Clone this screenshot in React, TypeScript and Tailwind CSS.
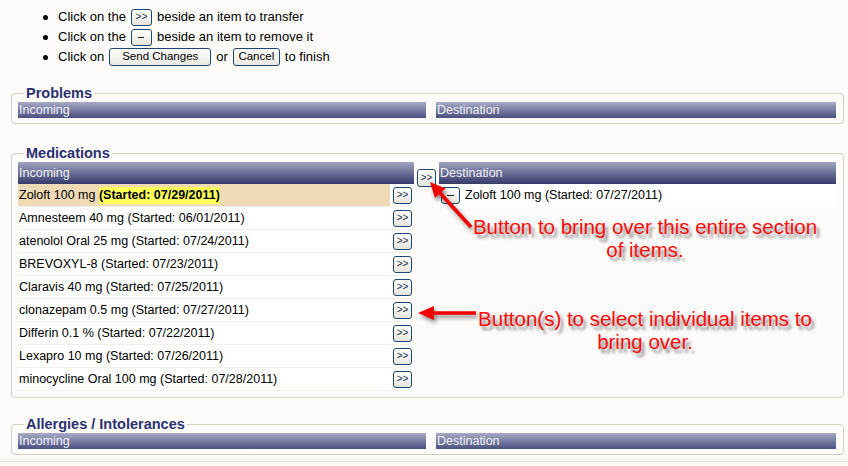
import React from 'react';

const meds = [
  { name: 'Zoloft 100 mg', started: '07/29/2011', hot: true },
  { name: 'Amnesteem 40 mg', started: '06/01/2011' },
  { name: 'atenolol Oral 25 mg', started: '07/24/2011' },
  { name: 'BREVOXYL-8', started: '07/23/2011' },
  { name: 'Claravis 40 mg', started: '07/25/2011' },
  { name: 'clonazepam 0.5 mg', started: '07/27/2011' },
  { name: 'Differin 0.1 %', started: '07/22/2011' },
  { name: 'Lexapro 10 mg', started: '07/26/2011' },
  { name: 'minocycline Oral 100 mg', started: '07/28/2011' },
];

function SmallButton({ label, className = '' }: { label: string; className?: string }) {
  return <span className={`inline-flex items-center justify-center w-[19px] h-[17px] border border-[#1e4672] rounded-[3px] bg-gradient-to-b from-white to-[#e6e5dc] text-[10px] leading-none text-[#1a2a4a] ${className}`}>
      {label}
    </span>;
}

function Minus() {
  return <span className="inline-flex items-center justify-center w-[19px] h-[17px] border border-[#1e4672] rounded-[3px] bg-gradient-to-b from-white to-[#e6e5dc]">
      <span className="block w-[7px] h-px bg-[#222]" />
    </span>;
}

function Header({ label, tall = false }: { label: string; tall?: boolean }) {
  return <div className={tall ? 'h-[22px] flex items-center pl-px text-[12.5px] text-[#f2f3fa] bg-gradient-to-b from-[#a2a5c1] to-[#363b6a]' : 'h-[16px] flex items-center pl-px text-[12.5px] text-[#f2f3fa] bg-gradient-to-b from-[#a9abc5] to-[#4b5080]'}>
      {label}
    </div>;
}

function Section({ title, className = '', children }: { title: string; className?: string; children: React.ReactNode }) {
  return <fieldset className={`ml-[11px] mr-[4px] border border-[#d2d0c0] rounded-[4px] pl-[6px] pr-[7px] ${className}`}>
      <legend className="ml-[6px] px-[2px] text-[14.5px] leading-[16px] font-bold text-[#2c3170]">
        {title}
      </legend>
      {children}
    </fieldset>;
}

function EmptySection({ title, className }: { title: string; className: string }) {
  return <Section title={title} className={className}>
      <div className="grid grid-cols-[408px_1fr] gap-[10px] pt-px">
        <Header label="Incoming" />
        <Header label="Destination" />
      </div>
    </Section>;
}

export default function App() {
  return <div className="relative w-[848px] h-[466px] overflow-hidden bg-[#fcfbf9] font-['Liberation_Sans',Arial,sans-serif] text-black">
      <ul className="pt-[7px] pl-[43px] text-[13px]">
        <li className="flex items-center h-[20px]">
          <span className="w-[5px] h-[5px] rounded-full bg-black mr-[10px]" />
          Click on the
          <SmallButton label=">>" className="mx-[5px] w-[21px] h-[17px]" />
          beside an item to transfer
        </li>
        <li className="flex items-center h-[20px]">
          <span className="w-[5px] h-[5px] rounded-full bg-black mr-[10px]" />
          Click on the
          <span className="mx-[5px] inline-flex items-center justify-center w-[21px] h-[17px] border border-[#1e4672] rounded-[3px] bg-gradient-to-b from-white to-[#e6e5dc]">
            <span className="block w-[6px] h-px bg-[#222]" />
          </span>
          beside an item to remove it
        </li>
        <li className="flex items-center h-[20px]">
          <span className="w-[5px] h-[5px] rounded-full bg-black mr-[10px]" />
          Click on
          <span className="mx-[5px] inline-flex items-center justify-center w-[102px] h-[18px] border border-[#1e4672] rounded-[3px] bg-gradient-to-b from-white to-[#e9e8e0] text-[11.5px]">
            Send Changes
          </span>
          or
          <span className="mx-[5px] inline-flex items-center justify-center w-[47px] h-[18px] border border-[#1e4672] rounded-[3px] bg-gradient-to-b from-white to-[#e9e8e0] text-[11.5px]">
            Cancel
          </span>
          to finish
        </li>
      </ul>

      <EmptySection title="Problems" className="mt-[18px] pb-[5px]" />

      <Section title="Medications" className="mt-[21px] pb-[6px]">
        <div className="grid grid-cols-[396px_25px_1fr] pt-px">
          <div>
            <Header label="Incoming" tall />
            {meds.map(m => <div key={m.name} className="flex h-[23px] bg-white border-b border-[#f1f1ec] text-[12.5px]">
                <div className={`w-[372px] flex items-center pl-px ${m.hot ? 'bg-[#efdab6]' : ''}`}>
                  {m.name}&nbsp;
                  {m.hot ? <span className="font-bold bg-[#ffff5a] leading-[17px]">
                      (Started: {m.started})
                    </span> : <span>(Started: {m.started})</span>}
                </div>
                <div className="flex items-center pl-[3px]">
                  <SmallButton label=">>" />
                </div>
              </div>)}
          </div>
          <div className="pl-[3px] pt-[2px]">
            <SmallButton label=">>" className="h-[18px]" />
          </div>
          <div>
            <Header label="Destination" tall />
            <div className="flex items-center h-[23px] bg-white pl-[2px] text-[12.5px]">
              <Minus />
              <span className="ml-[5px]">Zoloft 100 mg (Started: 07/27/2011)</span>
            </div>
          </div>
        </div>
      </Section>

      <EmptySection title="Allergies / Intolerances" className="mt-[18px] pb-[5px]" />
      <div className="mt-[6px] h-px bg-[#ecebe0]" />

      <svg className="absolute left-0 top-0 pointer-events-none [filter:drop-shadow(2px_3px_2px_rgba(0,0,0,0.45))]" width="848" height="466">
        <line x1="471" y1="227" x2="440" y2="193" stroke="#f00000" strokeWidth="3.5" />
        <polygon points="430,182 445.5,188.5 435,198" fill="#f00000" />
        <line x1="476" y1="313" x2="432" y2="313" stroke="#f00000" strokeWidth="3.5" />
        <polygon points="418,313 434,306 434,320" fill="#f00000" />
      </svg>

      <div className="absolute left-[445px] top-[215px] w-[400px] text-center text-[20.5px] leading-[23px] text-[#ff0a0a] [text-shadow:3px_4px_3px_rgba(0,0,0,0.45)]">
        Button to bring over this entire section
        <br />
        of items.
      </div>
      <div className="absolute left-[445px] top-[307px] w-[400px] text-center text-[20.5px] leading-[23px] text-[#ff0a0a] [text-shadow:3px_4px_3px_rgba(0,0,0,0.45)]">
        Button(s) to select individual items to
        <br />
        bring over.
      </div>
    </div>;
}
